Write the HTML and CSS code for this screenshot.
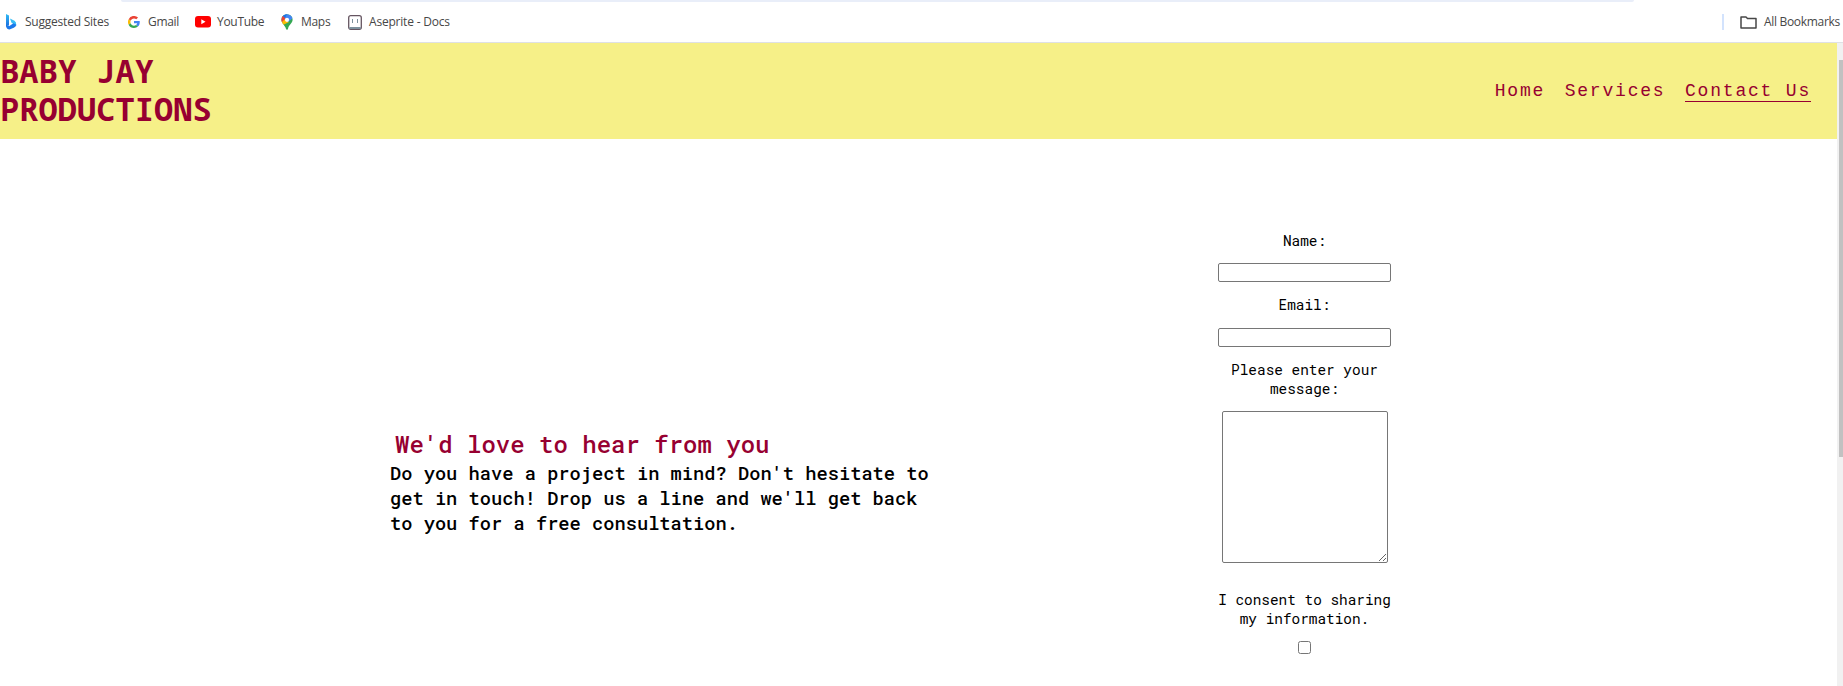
FILE: index.html
```html
<!DOCTYPE html>
<html lang="en">
<head>
<meta charset="utf-8">
<title>Baby Jay Productions</title>
<link rel="stylesheet" href="styles.css">
</head>
<body>
<div class="toolbar-edge"></div>
<div class="bookmarks">
  <span class="bookmark suggested"><svg width="12" height="16" viewBox="0 0 12 16"><defs><linearGradient id="b" x1="0" y1="0" x2="0" y2="1"><stop stop-color="#31bdf5"/><stop offset="1" stop-color="#1768dc"/></linearGradient></defs><path fill="url(#b)" d="M1 0l3 1.500v9.200L1 13z"/><path fill="#35bdf5" d="M5 4.500l4.500 2.200q2 1.200 1.800 5l-2.300-1.500-2.500-1.500z"/><path fill="#1b78ea" d="M1 12.200l3-1v1l4.500-3 2.800 1.500q-.3 2.200-2.500 3L4.500 15.400Q2 15.500 1 12.200z"/></svg><span class="label">Suggested Sites</span></span>
  <span class="bookmark gmail"><svg width="12" height="12" viewBox="0 0 48 48"><path fill="#ea4335" d="M24 9.500c3.500 0 6.700 1.200 9.200 3.600l6.900-6.900A24 24 0 0 0 2.600 13.200l8 6.200C12.400 13.700 17.700 9.500 24 9.500z"/><path fill="#4285f4" d="M47 24.500c0-1.600-.2-3.100-.4-4.500H24v9h12.900c-.6 3-2.300 5.500-4.800 7.200l7.700 6c4.500-4.200 7.200-10.400 7.200-17.700z"/><path fill="#fbbc05" d="M10.500 28.600a14.500 14.500 0 0 1 0-9.200l-8-6.200a24 24 0 0 0 0 21.600z"/><path fill="#34a853" d="M24 48c6.500 0 11.900-2.100 15.800-5.800l-7.700-6c-2.200 1.500-4.900 2.300-8.100 2.300-6.300 0-11.600-4.200-13.500-9.900l-8 6.200A24 24 0 0 0 24 48z"/></svg><span class="label">Gmail</span></span>
  <span class="bookmark youtube"><svg width="16" height="12" viewBox="0 0 16 12"><rect width="16" height="11.500" rx="3" fill="#f00"/><path fill="#fff" d="M6.300 3.300l4.200 2.400-4.200 2.500z"/></svg><span class="label">YouTube</span></span>
  <span class="bookmark maps"><svg width="12" height="16" viewBox="0 0 12 16"><clipPath id="pin"><path d="M6 .2a5.600 5.600 0 0 1 5.600 5.600c0 3.700-3.700 4.500-4.600 9.200q-.2.800-1 .8t-1-.8C4.500 12 .4 9.500.4 5.800A5.600 5.600 0 0 1 6 .2z"/></clipPath><g clip-path="url(#pin)"><path fill="#34a853" d="M0 0h12v16H0z"/><path fill="#fbbc04" d="M0 12V8l4-4 4 4z"/><path fill="#4285f4" d="M2 0h10v4L7 8 4 5z"/><path fill="#1a73e8" d="M2 0h4l-3 6-2-2z"/><path fill="#ea4335" d="M0 0l4.500 4.500L0 9z"/><circle cx="6" cy="5.800" r="2.100" fill="#fff"/></g></svg><span class="label">Maps</span></span>
  <span class="bookmark aseprite"><svg width="14" height="15" viewBox="0 0 14 15"><rect x=".7" y=".7" width="12.600" height="13.600" rx="2" fill="#fff" stroke="#655561" stroke-width="1.300"/><path fill="#7d929e" d="M1.300 12h11.400v2H1.300zM4 4h1v4H4zM9 4h1v4H9z"/></svg><span class="label">Aseprite - Docs</span></span>
  <span class="all"><span class="divider"></span><svg width="17" height="13" viewBox="0 0 17 13"><path fill="none" stroke="#474747" stroke-width="1.500" stroke-linejoin="round" d="M1 1h5l1.500 1.500H16V12H1z"/></svg><span class="label">All Bookmarks</span></span>
</div>
<div class="viewport">
  <div class="page">
    <header class="header">
      <h1 class="logo">BABY JAY<br>PRODUCTIONS</h1>
      <nav class="nav"><a>Home</a><a>Services</a><a class="active">Contact Us</a></nav>
    </header>
    <main class="main">
      <section class="intro">
        <h2 class="title">We'd love to hear from you</h2>
        <h3 class="text">Do you have a project in mind? Don't hesitate to<br>get in touch! Drop us a line and we'll get back<br>to you for a free consultation.</h3>
      </section>
      <form class="form">
        <label for="name">Name:</label>
        <input class="field" id="name" type="text">
        <label for="email">Email:</label>
        <input class="field" id="email" type="text">
        <label for="message">Please enter your<br>message:</label>
        <textarea class="message" id="message"></textarea>
        <label for="consent">I consent to sharing<br>my information.</label>
        <input class="check" id="consent" type="checkbox">
      </form>
    </main>
  </div>
  <div class="scrollbar"><div class="thumb"></div></div>
</div>
</body>
</html>
```
FILE: styles.css
```css
* { box-sizing: border-box; }
body { margin: 0; height: 686px; overflow: hidden; background: #fff; color: #000; }
.toolbar-edge { height: 2px; margin: 0 209px 0 121px; background: #e9eef9; border-radius: 0 0 8px 8px; }
.bookmarks { height: 41px; display: flex; align-items: center; border-bottom: 1px solid #dfe1e5; padding: 0 3px 0 5px; font: 12px/16px "Open Sans", sans-serif; color: #474747; }
.bookmark, .all { display: flex; align-items: center; white-space: nowrap; }
.bookmark svg, .all svg { flex: none; }
.suggested { width: 123px; gap: 8px; letter-spacing: -0.22px; }
.gmail { width: 67px; gap: 8px; letter-spacing: -0.3px; }
.youtube { width: 86px; gap: 6px; letter-spacing: -0.3px; }
.maps { width: 67px; gap: 8px; letter-spacing: -0.3px; }
.aseprite { gap: 7px; letter-spacing: -0.2px; }
.all { margin-left: auto; letter-spacing: -0.3px; }
.all svg { margin: 0 7px 0 16px; }
.divider { width: 2px; height: 16px; background: #d3e3fd; }
.viewport { display: flex; height: 643px; }
.page { flex: 1; font-family: "Roboto Mono", "Liberation Mono", monospace; }
.header { height: 96px; background: #f6f088; color: #970031; display: flex; justify-content: space-between; align-items: center; padding: 0 26px 0 0; }
.logo { margin: 0; font: 700 32px/38px "Noto Sans Mono", "DejaVu Sans Mono", monospace; letter-spacing: 0.04px; padding-bottom: 2px; }
.nav { display: flex; gap: 19.5px; font: 18px/21px "Liberation Mono", monospace; letter-spacing: 1.8px; }
.nav a { border-bottom: 1px solid transparent; padding-top: 1px; height: 22px; line-height: 20px; }
.nav .active { border-color: #970031; }
.main { display: flex; padding-left: 390px; }
.intro { width: 828px; padding-top: 290px; }
.title { margin: 0 0 0 5px; font-size: 24px; line-height: 31px; font-weight: 500; color: #970031; }
.text { margin: 0; font-size: 18.72px; line-height: 25px; font-weight: 500; }
.form { width: 173px; padding-top: 92px; display: flex; flex-direction: column; align-items: center; text-align: center; font-size: 14.4px; line-height: 19px; font-weight: 400; }
.form label { white-space: nowrap; }
.field { width: 173px; height: 19px; margin: 13px 0; border: 1px solid #767676; border-radius: 2px; flex: none; }
#email { margin-top: 14px; }
.message { width: 166px; height: 152px; margin: 13px 0 27px; border: 1px solid #767676; border-radius: 2px; flex: none; }
.check { width: 13px; height: 13px; margin: 13px 0 0; }
.scrollbar { width: 6px; background: #f1f1f1; padding: 17px 0 0 2px; }
.thumb { height: 397px; background: #c1c1c1; }
```
